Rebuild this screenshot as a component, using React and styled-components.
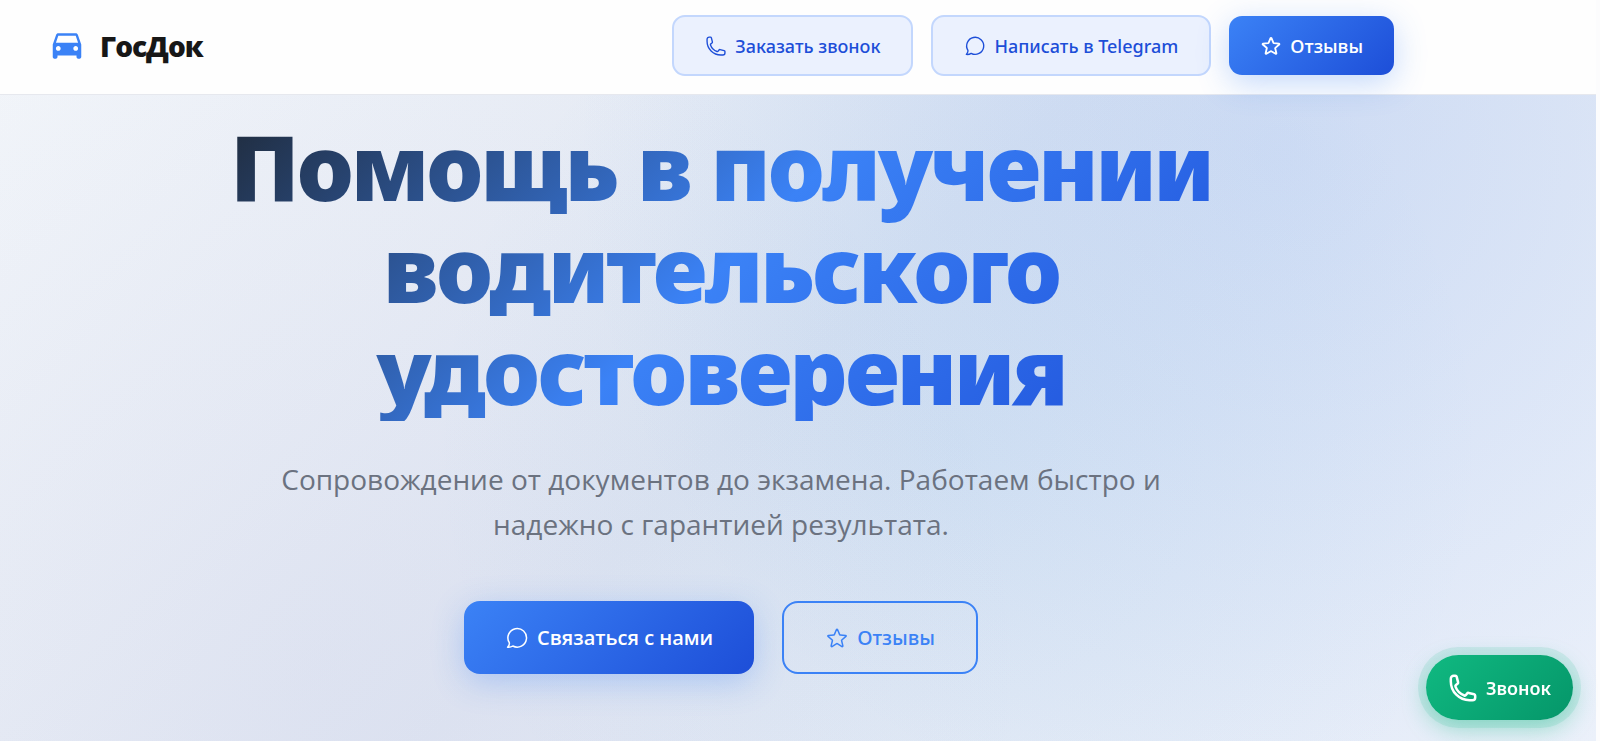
import React from "react";
import styled, { createGlobalStyle, css } from "styled-components";

const GlobalStyle = createGlobalStyle`
  *, *::before, *::after { box-sizing: border-box; }
  html { background: #fcfcfd; }
  body {
    margin: 0;
    padding-right: 4px;
    font-family: "Segoe UI", "Open Sans", "Noto Sans", sans-serif;
    color: #111827;
  }
`;

const Page = styled.div`
  display: flex;
  flex-direction: column;
  min-height: 100vh;
  background:
    radial-gradient(circle at 20% 90%, rgba(120, 119, 198, 0.05), transparent 50%),
    radial-gradient(circle at 80% 20%, rgba(59, 130, 246, 0.13), transparent 50%),
    radial-gradient(circle at 60% 60%, rgba(59, 160, 220, 0.08), transparent 50%),
    linear-gradient(135deg, #f3f6fa 0%, #e0e6f2 50%, #ecf1fa 100%);
`;

const Header = styled.header`
  background: #fefefe;
  border-bottom: 1px solid #e6e8ee;
`;

const HeaderInner = styled.div`
  display: flex;
  align-items: center;
  justify-content: space-between;
  max-width: 1442px;
  padding: 15px 48px 18px;
`;

const Brand = styled.a`
  display: flex;
  align-items: center;
  gap: 14px;
  color: #171717;
  font-size: 28px;
  line-height: 36px;
  font-weight: 900;
  letter-spacing: -1px;
  text-decoration: none;
`;

const BrandIcon = styled.svg`
  width: 38px;
  height: 38px;
  fill: #3b82f6;
`;

const Nav = styled.nav`
  display: flex;
  align-items: center;
  gap: 18px;
`;

const Icon = styled.svg`
  width: ${(p) => p.$size}px;
  height: ${(p) => p.$size}px;
  flex: none;
  fill: none;
  stroke: currentColor;
  stroke-width: ${(p) => p.$weight || 1.5};
  stroke-linecap: round;
  stroke-linejoin: round;
`;

const primary = css`
  border: 0;
  color: #fff;
  font-family: "Segoe UI", "Open Sans", sans-serif;
  font-weight: 600;
  background: linear-gradient(135deg, #3b82f6 0%, #1d4ed8 100%);
  box-shadow: 0 8px 32px rgba(59, 130, 246, 0.3);
`;

const Button = styled.button`
  display: flex;
  align-items: center;
  justify-content: center;
  gap: 8px;
  font-family: "Segoe UI", "Noto Sans", sans-serif;
  white-space: nowrap;
  cursor: pointer;
`;

const NavButton = styled(Button)`
  height: ${(p) => (p.$primary ? 59 : 61)}px;
  padding: 0 31px;
  border: 2px solid #c3d7fd;
  border-radius: 13px;
  background: #ebf1fe;
  color: #1d4ed8;
  font-size: 18px;
  font-weight: 500;
  ${(p) => p.$primary && primary}
`;

const Hero = styled.main`
  display: flex;
  flex-direction: column;
  align-items: center;
  max-width: 1442px;
  padding: 20px 48px 68px;
  text-align: center;
`;

const Title = styled.h1`
  max-width: 1020px;
  margin: 0;
  font-family: "Segoe UI", "Noto Sans", sans-serif;
  font-size: 91px;
  line-height: 102px;
  font-weight: 900;
  letter-spacing: -3px;
  color: transparent;
  background: linear-gradient(135deg, #1f2937 0%, #3b82f6 50%, #1d4ed8 100%);
  -webkit-background-clip: text;
  background-clip: text;
`;

const Lead = styled.p`
  max-width: 918px;
  margin: 36px 0 0;
  color: #6b7280;
  font-size: 28px;
  line-height: 45px;
`;

const Actions = styled.div`
  display: flex;
  gap: 28px;
  margin-top: 54px;
`;

const HeroButton = styled(Button)`
  height: 73px;
  padding: 0 41px;
  border: 2px solid #3b82f6;
  border-radius: 16px;
  background: transparent;
  color: #3b82f6;
  font-size: 20px;
  font-weight: 500;
  ${(p) => p.$primary && primary}
`;

const CallButton = styled(Button)`
  position: fixed;
  right: 27px;
  bottom: 21px;
  height: 65px;
  padding: 0 22px;
  border: 0;
  border-radius: 33px;
  background: linear-gradient(135deg, #10b981 0%, #059669 100%);
  box-shadow: 0 0 0 8px rgba(16, 185, 129, 0.12), 0 8px 24px rgba(16, 185, 129, 0.4);
  color: #fff;
  font-size: 18px;
  font-weight: 600;
`;

const PHONE = "M2.25 6.75c0 8.284 6.716 15 15 15h2.25a2.25 2.25 0 0 0 2.25-2.25v-1.372c0-.516-.351-.966-.852-1.091l-4.423-1.106c-.44-.11-.902.055-1.173.417l-.97 1.293c-.282.376-.769.542-1.21.38a12.035 12.035 0 0 1-7.143-7.143c-.162-.441.004-.928.38-1.21l1.293-.97c.363-.271.527-.734.417-1.173L6.963 3.102a1.125 1.125 0 0 0-1.091-.852H4.5A2.25 2.25 0 0 0 2.25 4.5v2.25Z";
const CHAT = "M7.8 20A9.3 9.3 0 1 0 4.3 16.7c.4 1.4-.4 3-1.7 4.5 2 .3 3.7-.2 5.2-1.2Z";
const STAR = "M11.48 3.499a.562.562 0 0 1 1.04 0l2.125 5.111a.563.563 0 0 0 .475.345l5.518.442c.499.04.701.663.321.988l-4.204 3.602a.563.563 0 0 0-.182.557l1.285 5.385a.562.562 0 0 1-.84.61l-4.725-2.885a.562.562 0 0 0-.586 0L6.982 20.54a.562.562 0 0 1-.84-.61l1.285-5.386a.562.562 0 0 0-.182-.557l-4.204-3.602a.562.562 0 0 1 .321-.988l5.518-.442a.563.563 0 0 0 .475-.345L11.48 3.5Z";
const CAR = "M18.92 5.01C18.72 4.42 18.16 4 17.5 4h-11c-.66 0-1.21.42-1.42 1.01L3 11v8c0 .55.45 1 1 1h1c.55 0 1-.45 1-1v-1h12v1c0 .55.45 1 1 1h1c.55 0 1-.45 1-1v-8l-2.08-5.99zM6.5 15c-.83 0-1.5-.67-1.5-1.5S5.67 12 6.5 12s1.5.67 1.5 1.5S7.33 15 6.5 15zm11 0c-.83 0-1.5-.67-1.5-1.5s.67-1.5 1.5-1.5 1.5.67 1.5 1.5-.67 1.5-1.5 1.5zM5 10l1.5-4.5h11L19 10H5z";

function LineIcon({ path, size, weight }) {
  return (
    <Icon viewBox="0 0 24 24" $size={size} $weight={weight} aria-hidden="true">
      <path d={path} />
    </Icon>
  );
}

export default function App() {
  return (
    <>
      <GlobalStyle />
      <Page>
        <Header>
          <HeaderInner>
            <Brand href="#">
              <BrandIcon viewBox="0 0 24 24" aria-hidden="true"><path d={CAR} /></BrandIcon>
              ГосДок
            </Brand>
            <Nav>
              <NavButton type="button"><LineIcon path={PHONE} size={22} />Заказать звонок</NavButton>
              <NavButton type="button"><LineIcon path={CHAT} size={22} />Написать в Telegram</NavButton>
              <NavButton type="button" $primary><LineIcon path={STAR} size={22} weight={2} />Отзывы</NavButton>
            </Nav>
          </HeaderInner>
        </Header>
        <Hero>
          <Title>Помощь в получении водительского удостоверения</Title>
          <Lead>Сопровождение от документов до экзамена. Работаем быстро и надежно с гарантией результата.</Lead>
          <Actions>
            <HeroButton type="button" $primary><LineIcon path={CHAT} size={24} />Связаться с нами</HeroButton>
            <HeroButton type="button"><LineIcon path={STAR} size={24} />Отзывы</HeroButton>
          </Actions>
        </Hero>
        <CallButton type="button"><LineIcon path={PHONE} size={30} weight={2} />Звонок</CallButton>
      </Page>
    </>
  );
}
